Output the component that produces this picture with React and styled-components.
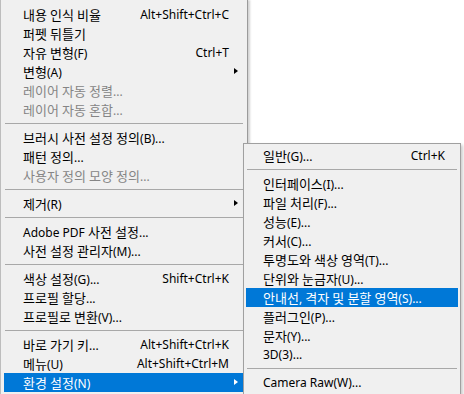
import React from 'react';
import styled, { createGlobalStyle } from 'styled-components';

const GlobalStyle = createGlobalStyle`
    html, body {
        margin: 0;
        padding: 0;
        background: #ffffff;
        overflow: hidden;
    }
    #root {
        width: 464px;
        height: 394px;
        position: relative;
        overflow: hidden;
    }
`;

const Page = styled.div`
    position: relative;
    width: 464px;
    height: 394px;
    background: #ffffff;
    font-family: "Noto Sans", "Noto Sans CJK KR", sans-serif;
    font-size: 12px;
`;

const MainMenu = styled.div`
    box-sizing: border-box;
    width: 248px;
    height: 394px;
    display: flex;
    flex-direction: column;
    background: #f0f0f0;
    border-left: 1px solid #bdbdbd;
    border-right: 1px solid #9a9a9a;
    box-shadow: 2px 0 2px rgba(0, 0, 0, 0.18);
    padding: 5px 3px 0 3px;
`;

const SubMenu = styled.div`
    position: absolute;
    left: 243px;
    top: 143px;
    box-sizing: border-box;
    width: 218px;
    height: 260px;
    display: flex;
    flex-direction: column;
    background: #f0f0f0;
    border: 1px solid #a0a0a0;
    box-shadow: 2px 2px 3px rgba(0, 0, 0, 0.2);
    padding: 2px 2px 0 2px;
`;

const Row = styled.div`
    display: flex;
    align-items: center;
    height: 19px;
    line-height: 19px;
    padding: ${p => p.$sub ? '0 13px 0 17px' : '0 15px 0 19px'};
    background: ${p => p.$active ? '#0078d7' : 'transparent'};
    color: ${p => p.$active ? '#ffffff' : p.$disabled ? '#858585' : '#000000'};
    white-space: nowrap;
    position: relative;
`;

const Label = styled.span`
    flex: 1;
`;

// hangul runs are drawn a bit larger so their width matches Malgun Gothic
const Hangul = styled.span`
    font-family: "Noto Sans CJK KR", sans-serif;
    font-size: 13px;
`;

const Shortcut = styled.span`
    text-align: right;
`;

const Arrow = styled.span`
    position: absolute;
    right: 6px;
    top: 6px;
    width: 0;
    height: 0;
    border-top: 3.5px solid transparent;
    border-bottom: 3.5px solid transparent;
    border-left: 4px solid ${p => p.$active ? '#ffffff' : '#000000'};
`;

const Separator = styled.div`
    height: 1px;
    margin: 4px 1px 4px 1px;
    background: #a8a8a8;
`;

const mainItems = [
    { label: '내용 인식 비율', key: 'Alt+Shift+Ctrl+C' },
    { label: '퍼펫 뒤틀기' },
    { label: '자유 변형(F)', key: 'Ctrl+T' },
    { label: '변형(A)', arrow: true },
    { label: '레이어 자동 정렬...', disabled: true },
    { label: '레이어 자동 혼합...', disabled: true },
    'sep',
    { label: '브러시 사전 설정 정의(B)...' },
    { label: '패턴 정의...' },
    { label: '사용자 정의 모양 정의...', disabled: true },
    'sep',
    { label: '제거(R)', arrow: true },
    'sep',
    { label: 'Adobe PDF 사전 설정...' },
    { label: '사전 설정 관리자(M)...' },
    'sep',
    { label: '색상 설정(G)...', key: 'Shift+Ctrl+K' },
    { label: '프로필 할당...' },
    { label: '프로필로 변환(V)...' },
    'sep',
    { label: '바로 가기 키...', key: 'Alt+Shift+Ctrl+K' },
    { label: '메뉴(U)', key: 'Alt+Shift+Ctrl+M' },
    { label: '환경 설정(N)', arrow: true, active: true },
];

const subItems = [
    { label: '일반(G)...', key: 'Ctrl+K' },
    'sep',
    { label: '인터페이스(I)...' },
    { label: '파일 처리(F)...' },
    { label: '성능(E)...' },
    { label: '커서(C)...' },
    { label: '투명도와 색상 영역(T)...' },
    { label: '단위와 눈금자(U)...' },
    { label: '안내선, 격자 및 분할 영역(S)...', active: true },
    { label: '플러그인(P)...' },
    { label: '문자(Y)...' },
    { label: '3D(3)...' },
    'sep',
    { label: 'Camera Raw(W)...' },
];

const splitText = (text) => text.split(/([\uAC00-\uD7A3]+)/).map((part, i) => (
    /[\uAC00-\uD7A3]/.test(part) ? <Hangul key={i}>{part}</Hangul> : part
));

const renderItems = (items, sub) => items.map((item, i) => (
    item === 'sep' ? <Separator key={i} /> : (
        <Row key={i} $sub={sub} $active={item.active} $disabled={item.disabled}>
            <Label>{splitText(item.label)}</Label>
            {item.key && <Shortcut>{item.key}</Shortcut>}
            {item.arrow && <Arrow $active={item.active} />}
        </Row>
    )
));

export default function App() {
    return (
        <>
            <GlobalStyle />
            <Page>
                <MainMenu>{renderItems(mainItems, false)}</MainMenu>
                <SubMenu>{renderItems(subItems, true)}</SubMenu>
            </Page>
        </>
    );
}
